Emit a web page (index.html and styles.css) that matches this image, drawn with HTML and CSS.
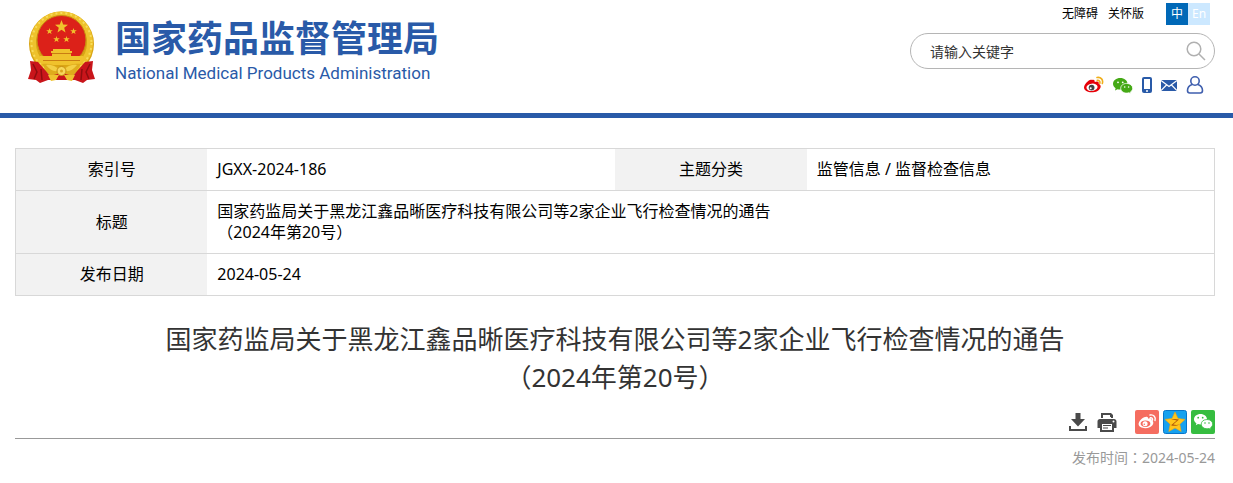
FILE: index.html
```html
<!DOCTYPE html>
<html lang="zh-CN">
<head>
    <meta charset="utf-8">
    <title>国家药品监督管理局</title>
    <link rel="stylesheet" href="styles.css">
</head>
<body>
    <header class="header">
        <a class="logo" href="#">
            <svg class="emblem" width="68" height="72" viewBox="0 0 68 72" aria-hidden="true">
                <circle cx="33.500" cy="33" r="32.500" fill="#d9a514"/>
                <circle cx="33.500" cy="32" r="28.500" fill="none" stroke="#eec22c" stroke-width="6"/>
                <circle cx="33.500" cy="32" r="30" fill="none" stroke="#f8dc5c" stroke-width="2" stroke-dasharray="2 3"/>
                <circle cx="33.500" cy="29" r="24.500" fill="#dc2119" stroke="#c88d10"/>
                <g fill="#f0c22c">
                    <path d="M33.500 9l1.700 4.600 4.800.2-3.800 3 1.300 4.700-4-2.700-4 2.700 1.300-4.700-3.800-3 4.800-.2z"/>
                    <path d="M21.500 17l.8 2.200h2.500l-2 1.500.8 2.400-2.100-1.400-2.100 1.400.8-2.400-2-1.500h2.500z"/>
                    <path d="M45.500 17l.8 2.200h2.500l-2 1.500.8 2.400-2.100-1.400-2.100 1.400.8-2.400-2-1.500h2.500z"/>
                    <path d="M28.500 25l.8 2.200h2.500l-2 1.500.8 2.400-2.100-1.400-2.100 1.400.8-2.400-2-1.500h2.500z"/>
                    <path d="M38.500 25l.8 2.200h2.500l-2 1.500.8 2.400-2.100-1.400-2.100 1.400.8-2.400-2-1.500h2.500z"/>
                    <path d="M25 38h17v2h2v2H23v-2h2zM24 43h19v2H24zM12 45h43v5l-4 4H16l-4-4z"/>
                </g>
                <path d="M24 42.500h19M15 49.500h37" stroke="#c97d12"/>
                <path d="M14 53c6-1 12 0 19.500 5C41 53 47 52 53 53l-7 11H21z" fill="#dfac1c"/>
                <path d="M2 50l8 1 7 8 5 6 11.500-3L45 65l5-6 7-8 8-1-1 9 3 9-8 1-4 3-8-3H20l-8 3-4-3-8-1 3-9z" fill="#c9151b"/>
                <path d="M5 53l4 8-3 7M62 53l-4 8 3 7M13 58l1 11M54 58l-1 11" fill="none" stroke="#8f0d0f" stroke-width="1.500"/>
                <path d="M18 54c6-1 10 2 14 5-5 3-10 0-14-5zM49 54c-6-1-10 2-14 5 5 3 10 0 14-5z" fill="#f3cf45"/>
                <circle cx="33.500" cy="60" r="4.500" fill="#f6d75b" stroke="#c88d10"/>
                <circle cx="33.500" cy="60" r="1.500" fill="#dca31c"/>
                <path d="M20 64l11 0-3 5-5 1zM47 64l-11 0 3 5 5 1z" fill="#efc22e"/>
            </svg>
            <span class="logo-text">
                <strong class="logo-cn">国家药品监督管理局</strong>
                <span class="logo-en">National Medical Products Administration</span>
            </span>
        </a>

        <div class="tools">
            <nav class="top-links">
                <a href="#">无障碍</a>
                <a href="#">关怀版</a>
                <span class="lang">
                    <a class="lang-cn" href="#">中</a><a class="lang-en" href="#">En</a>
                </span>
            </nav>
            <form class="search">
                <input type="text" aria-label="请输入关键字" placeholder="请输入关键字">
                <button type="button" aria-label="搜索">
                    <svg width="20" height="20" viewBox="0 0 20 20" fill="none" stroke="#b0b0b0" stroke-width="1.500"><circle cx="8" cy="8" r="6.800"/><path d="M13 13l6 6"/></svg>
                </button>
            </form>
            <div class="icons">
                <a href="#" aria-label="微博">
                    <svg width="20" height="18" viewBox="0 0 20 18">
                        <path d="M8 4c2-.8 3 .2 2.700 2 2.500-1 4.500-.6 4 1.700 3.500 1.500 2 5.500-1.200 7.200C8 17.800 0 16 0 11.500 0 8.500 4.800 3.500 7 3.700c.6 0 .9.200 1 .3z" fill="#e60008"/>
                        <ellipse cx="8" cy="11.300" rx="5.600" ry="3.700" transform="rotate(-8 8 11.300)" fill="#fff"/>
                        <circle cx="7.600" cy="11.600" r="2.900" fill="#444"/>
                        <circle cx="6.700" cy="12.200" r="1" fill="#fff"/>
                        <path d="M13 1.500c4-.8 6.500 2.500 5.300 6M13.300 4.400c1.800-.3 3 1 2.500 2.800" fill="none" stroke="#f0ae1b" stroke-width="1.600" stroke-linecap="round"/>
                    </svg>
                </a>
                <a href="#" aria-label="微信">
                    <svg width="20" height="18" viewBox="0 0 20 18">
                        <path d="M7.300 2C3.200 2 0 4.600 0 7.800c0 1.800 1 3.400 2.600 4.500L2 14.500l2.500-1.300c.9.300 1.800.4 2.800.4C11.300 13.600 14.500 11 14.500 7.800S11.300 2 7.300 2z" fill="#45a916"/>
                        <path d="M13.700 7.400c-3.500 0-6 2.200-6 4.900s2.500 4.800 6 4.800c.8 0 1.600-.1 2.300-.4l2 1.100-.5-1.900c1.300-.8 2.200-2.200 2.200-3.700 0-2.600-2.600-4.800-6-4.800z" fill="#45a916" stroke="#fff" stroke-width=".8"/>
                        <g fill="#fff"><circle cx="5" cy="6.300" r=".9"/><circle cx="9.700" cy="6.300" r=".9"/><circle cx="11.700" cy="11" r=".8"/><circle cx="15.600" cy="11" r=".8"/></g>
                    </svg>
                </a>
                <a href="#" aria-label="手机版">
                    <svg width="10" height="18" viewBox="0 0 10 18"><rect y="1" width="10" height="16" rx="2" fill="#295aa8"/><path d="M2 3h6v10H2z" fill="#fff"/><circle cx="5" cy="15" r="1" fill="#fff"/></svg>
                </a>
                <a href="#" aria-label="邮箱">
                    <svg width="16" height="18" viewBox="0 0 16 18"><path d="M0 4h16v11H0z" fill="#295aa8"/><path d="M0 4.500l8 6 8-6M0 14.500l5.500-5.500M16 14.500l-5.500-5.500" fill="none" stroke="#fff" stroke-width="1.200"/></svg>
                </a>
                <a href="#" aria-label="个人中心">
                    <svg width="18" height="18" viewBox="0 0 18 18" fill="none" stroke="#3f5fae" stroke-width="1.600"><circle cx="9" cy="5" r="4.200"/><path d="M6.300 8.500C3 9.600 1.500 12 1.500 14.500c0 1.500.8 2.500 2.300 2.500h10.400c1.500 0 2.300-1 2.300-2.500 0-2.500-1.500-4.900-4.800-6"/></svg>
                </a>
            </div>
        </div>
    </header>

    <main class="content">
        <table class="info">
            <tr>
                <th scope="row">索引号</th>
                <td>JGXX-2024-186</td>
                <th scope="row">主题分类</th>
                <td>监管信息 / 监督检查信息</td>
            </tr>
            <tr>
                <th scope="row">标题</th>
                <td colspan="3">国家药监局关于黑龙江鑫品晰医疗科技有限公司等2家企业飞行检查情况的通告<br>（2024年第20号）</td>
            </tr>
            <tr>
                <th scope="row">发布日期</th>
                <td colspan="3">2024-05-24</td>
            </tr>
        </table>

        <h1 class="title">国家药监局关于黑龙江鑫品晰医疗科技有限公司等2家企业飞行检查情况的通告<br>（2024年第20号）</h1>

        <div class="actions">
            <button type="button" aria-label="下载">
                <svg width="20" height="24" viewBox="0 0 20 24"><path d="M7.500 3h5v6H17l-7 7.500L3 9h4.500z" fill="#4a4a4a"/><path d="M2 16v4h16v-4" fill="none" stroke="#4a4a4a" stroke-width="2"/></svg>
            </button>
            <button type="button" aria-label="打印">
                <svg width="20" height="24" viewBox="0 0 20 24"><path d="M4 3h10l2 2v3H4z" fill="#4a4a4a"/><path d="M6 5h7v2h1v2H6z" fill="#fff"/><path d="M3 9h14c1.500 0 2.500 1 2.500 2.500V18H17v4H3v-4H.5v-6.500C.5 10 1.500 9 3 9z" fill="#4a4a4a"/><path d="M5 14h10v6H5z" fill="#fff"/><path d="M6 15.500h8M6 18h5" stroke="#4a4a4a" stroke-width="1.200"/><circle cx="16.500" cy="11.500" r="1" fill="#fff"/></svg>
            </button>
            <div class="share">
                <a href="#" aria-label="分享到微博">
                    <svg width="24" height="24" viewBox="0 0 24 24">
                        <rect width="24" height="24" rx="2" fill="#f56d60"/>
                        <path d="M10.500 7c1.700-.7 2.800.1 2.500 1.700 2.300-.9 4-.4 3.600 1.500 3 1.400 1.800 5-1.300 6.700-4.900 2.600-11.700.9-11.700-2.900C3.600 11 8.500 6.300 10.500 7z" fill="#fff"/>
                        <ellipse cx="10.500" cy="13.700" rx="4.900" ry="3.300" fill="#f56d60"/>
                        <circle cx="10.100" cy="13.800" r="2.500" fill="#fff"/><circle cx="9.300" cy="14.200" r=".8" fill="#f56d60"/>
                        <path d="M15 5c3.800-.7 6 2 5 5.500M15.300 7.700c1.600-.2 2.600.8 2.200 2.500" fill="none" stroke="#fff" stroke-width="1.400" stroke-linecap="round"/>
                    </svg>
                </a>
                <a href="#" aria-label="分享到QQ空间">
                    <svg width="24" height="24" viewBox="0 0 24 24">
                        <rect x=".5" y=".5" width="23" height="23" rx="2" fill="#16a1ef" stroke="#0875c9"/>
                        <path d="M12 2l3 6.500 7 .9-5.200 4.800 1.400 7.300L12 18l-6.200 3.500 1.400-7.300L2 9.400l7-.9z" fill="#ffc51c" stroke="#f4a40c" stroke-width=".6"/>
                        <path d="M8 9.500c3-.6 5.500-.6 8 .1l-5.800 4.900c2 .5 4.200.5 6.300 0-2.500 1.500-5.800 1.700-8.500.8l5.800-4.900c-2-.5-3.900-.6-5.800-.9z" fill="#b35a07"/>
                    </svg>
                </a>
                <a href="#" aria-label="分享到微信">
                    <svg width="24" height="24" viewBox="0 0 24 24">
                        <rect width="24" height="24" rx="2" fill="#36bd40"/>
                        <path d="M9.500 4C5.900 4 3 6.300 3 9.200c0 1.700.9 3.100 2.400 4.100l-.6 1.900 2.200-1.100c.8.200 1.600.3 2.500.3 3.600 0 6.500-2.300 6.500-5.200S13.100 4 9.500 4z" fill="#fff"/>
                        <path d="M16 9.500c-3.300 0-5.800 2-5.800 4.600s2.500 4.700 5.800 4.700c.7 0 1.400-.1 2-.3l2 1-.5-1.700c1.300-.9 2.200-2.200 2.200-3.700 0-2.600-2.500-4.600-5.700-4.600z" fill="#fff" stroke="#36bd40" stroke-width=".8"/>
                        <g fill="#36bd40"><circle cx="7.200" cy="7.700" r=".9"/><circle cx="11.700" cy="7.700" r=".9"/><circle cx="14" cy="13" r=".8"/><circle cx="18" cy="13" r=".8"/></g>
                    </svg>
                </a>
            </div>
        </div>

        <p class="date">发布时间<span class="colon" lang="zh-TW">：</span>2024-05-24</p>
    </main>
</body>
</html>
```
FILE: styles.css
```css
* {
    box-sizing: border-box;
}
body {
    margin: 0;
    background: #fff;
    color: #000;
    font-family: "Noto Sans", "Noto Sans CJK SC", sans-serif;
    font-size: 16px;
    line-height: 21px;
}
a {
    color: inherit;
    text-decoration: none;
}
button {
    border: 0;
    padding: 0;
    background: none;
    cursor: pointer;
}
svg {
    display: block;
}

/* header */
.header {
    display: flex;
    justify-content: space-between;
    height: 118px;
    padding: 0 18px 0 28px;
    border-bottom: 5px solid #295aa8;
}
.logo {
    display: flex;
    gap: 19px;
    color: #295aa8;
}
.emblem {
    margin-top: 11px;
}
.logo-text {
    display: flex;
    flex-direction: column;
    padding-top: 14px;
}
.logo-cn {
    font-family: "Noto Sans CJK SC", sans-serif;
    font-size: 36px;
    line-height: 44px;
}
.logo-en {
    font-family: Roboto, sans-serif;
    font-size: 17px;
    line-height: 30px;
}
.tools {
    width: 305px;
}
.top-links {
    display: flex;
    justify-content: flex-end;
    gap: 10px;
    padding: 3px 5px 0 0;
    font-size: 12px;
    line-height: 22px;
}
.lang {
    display: flex;
    margin-left: 12px;
    color: #fff;
    text-align: center;
}
.lang a {
    width: 22px;
}
.lang-cn {
    background: #0068b7;
}
.lang-en {
    background: #cce8ff;
}
.search {
    display: flex;
    align-items: center;
    height: 36px;
    margin-top: 8px;
    padding: 0 8px 0 19px;
    border: 1px solid #b5b5b5;
    border-radius: 18px;
}
.search input {
    flex: 1;
    min-width: 0;
    border: 0;
    padding: 0;
    outline: 0;
    background: none;
    font-family: inherit;
    font-size: 14px;
}
.search input::placeholder {
    color: #333;
}
.icons {
    display: flex;
    justify-content: flex-end;
    gap: 9px;
    padding: 7px 11px 0 0;
}

/* info table */
.content {
    padding: 30px 18px 0 15px;
}
.info {
    width: 100%;
    table-layout: fixed;
    border: 1px solid #d8d8d8;
    border-collapse: collapse;
}
.info th,
.info td {
    padding: 10px;
    border-bottom: 1px solid #d8d8d8;
    text-align: left;
}
.info th {
    width: 16%;
    background: #f2f2f2;
    font-weight: normal;
    text-align: center;
}

/* article */
.title {
    margin: 24px 0 0;
    color: #333;
    font-size: 26px;
    font-weight: normal;
    line-height: 38px;
    text-align: center;
}
.actions {
    display: flex;
    justify-content: flex-end;
    gap: 9px;
    margin-top: 14px;
    padding-bottom: 4px;
    border-bottom: 1px solid #999;
}
.share {
    display: flex;
    gap: 4px;
    margin-left: 9px;
}
.date {
    margin: 8px 0 0;
    color: #999;
    font-size: 14px;
    text-align: right;
}
.colon {
    font-family: "Noto Sans CJK TC", sans-serif;
    line-height: 1;
}
```
